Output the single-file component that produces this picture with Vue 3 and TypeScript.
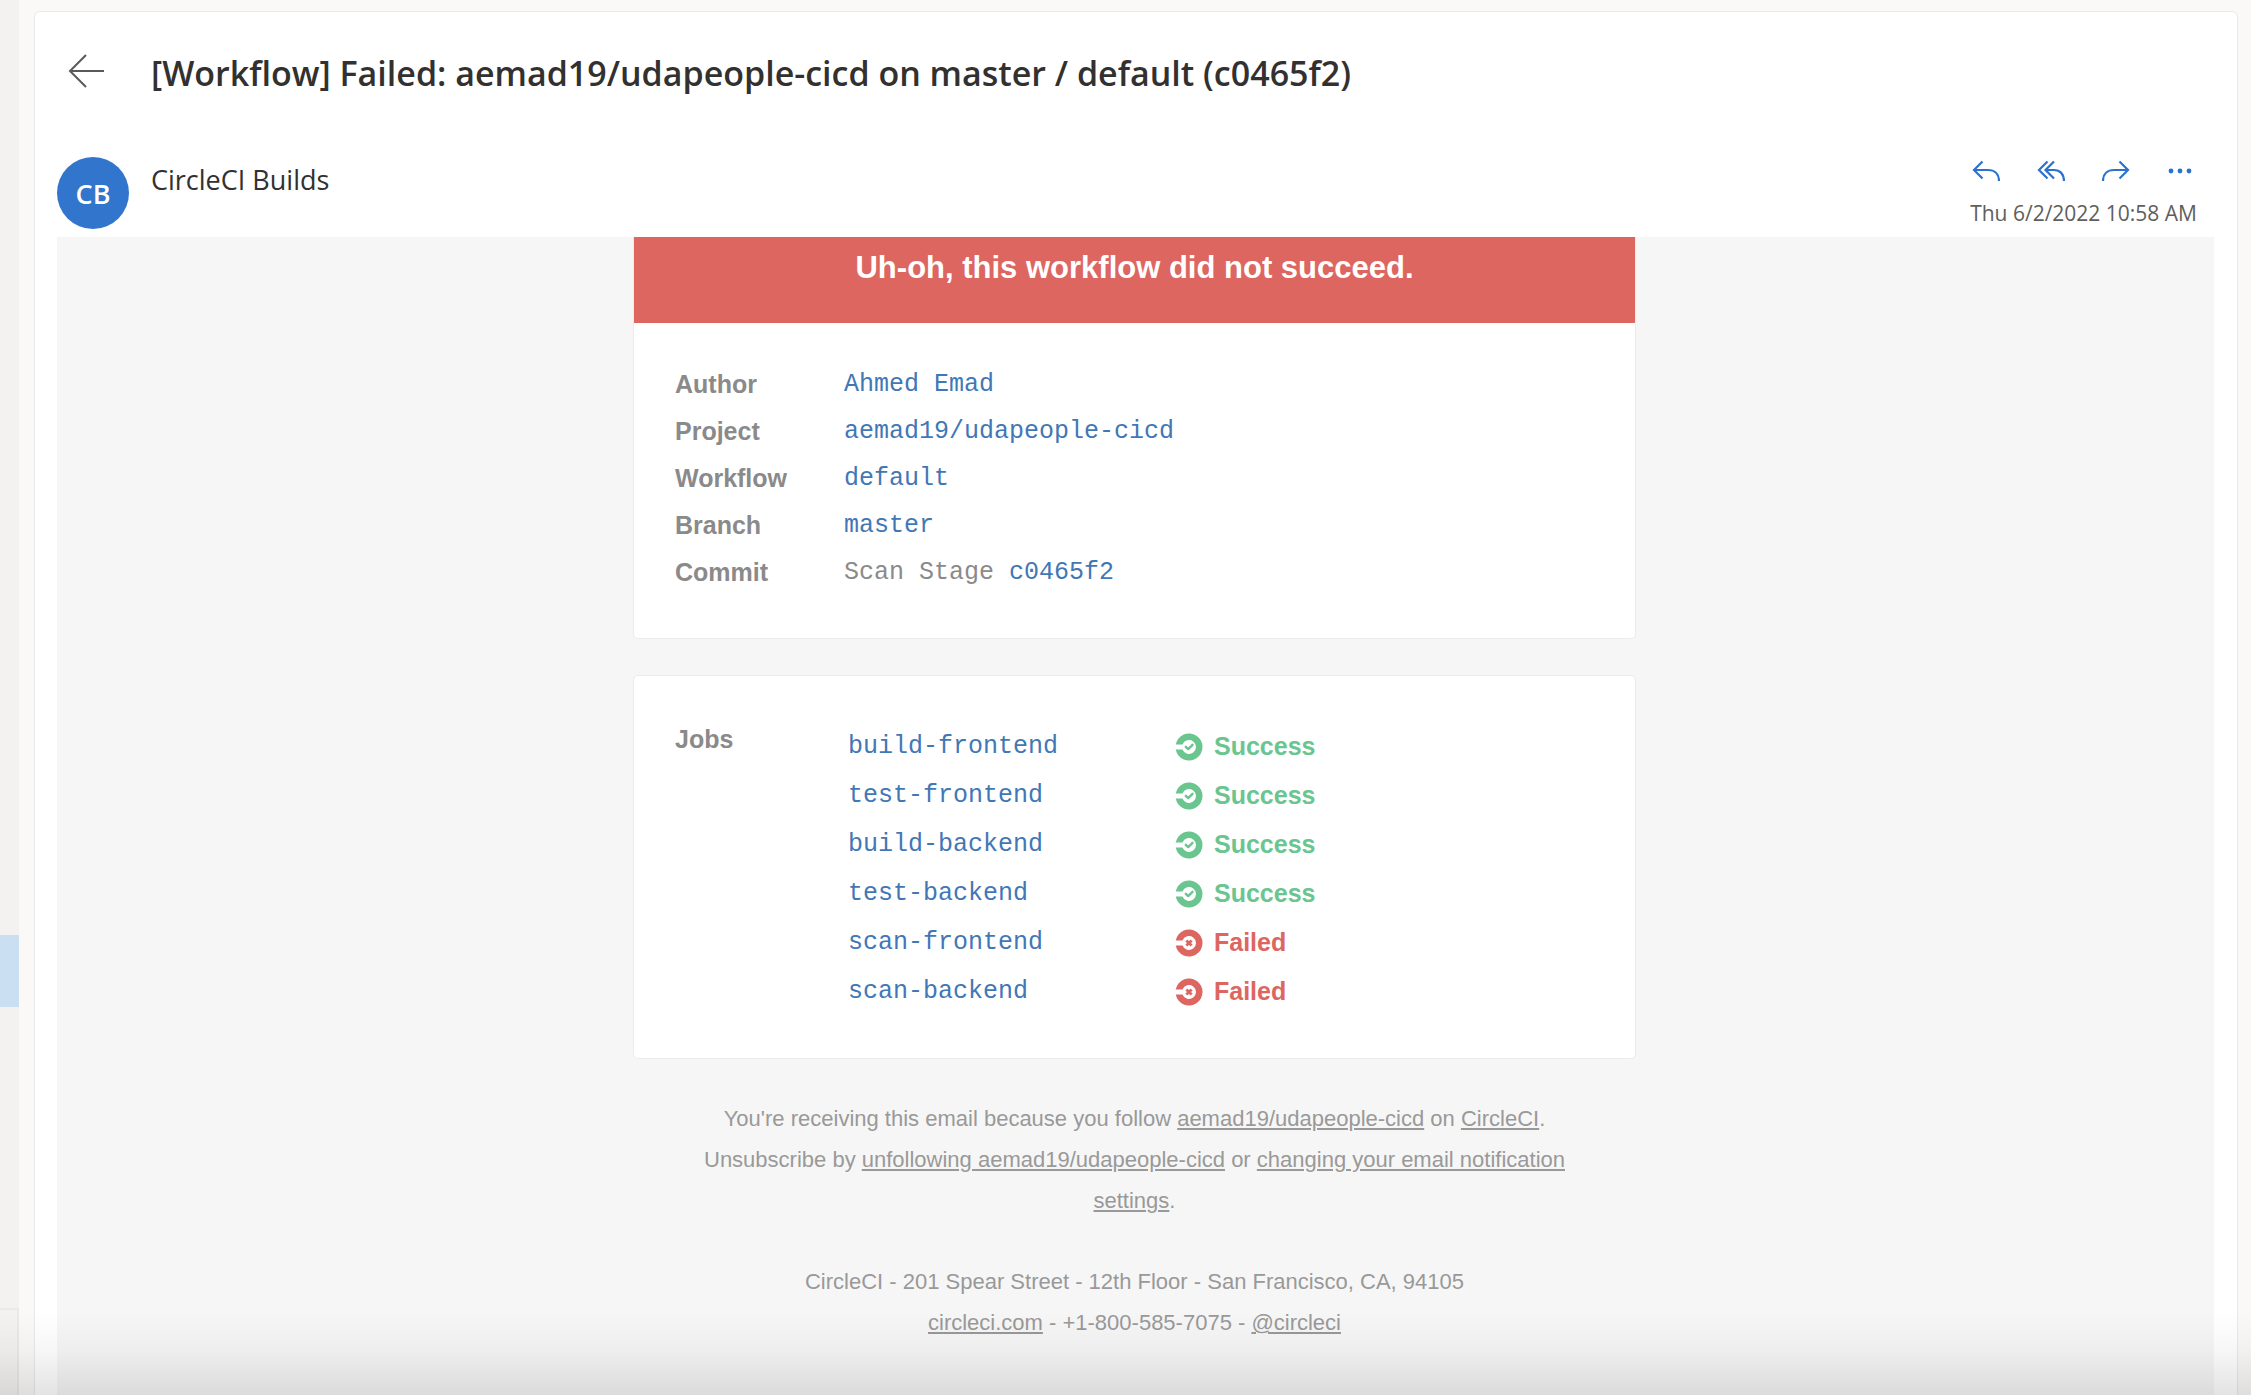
<script setup lang="ts">
interface Job {
  name: string
  ok: boolean
}

const details = [
  { label: 'Author', link: 'Ahmed Emad', note: '' },
  { label: 'Project', link: 'aemad19/udapeople-cicd', note: '' },
  { label: 'Workflow', link: 'default', note: '' },
  { label: 'Branch', link: 'master', note: '' },
  { label: 'Commit', link: 'c0465f2', note: 'Scan Stage' },
]

const jobs: Job[] = [
  { name: 'build-frontend', ok: true },
  { name: 'test-frontend', ok: true },
  { name: 'build-backend', ok: true },
  { name: 'test-backend', ok: true },
  { name: 'scan-frontend', ok: false },
  { name: 'scan-backend', ok: false },
]
</script>

<template>
  <div class="app">
    <aside class="rail">
      <div class="rail-selected"></div>
      <div class="rail-box"></div>
    </aside>

    <main class="panel">
      <header class="subject">
        <button class="icon-button" type="button" aria-label="Back">
          <svg width="38" height="34" viewBox="0 0 38 34" fill="none" stroke="#5b5a58" stroke-width="2">
            <path d="M37 17H3M19 1L3 17l16 16" />
          </svg>
        </button>
        <h1>[Workflow] Failed: aemad19/udapeople-cicd on master / default (c0465f2)</h1>
      </header>

      <section class="sender">
        <div class="avatar">CB</div>
        <h2>CircleCI Builds</h2>
        <div class="meta">
          <div class="actions">
            <button class="icon-button" type="button" aria-label="Reply">
              <svg width="28" height="22" viewBox="0 0 28 22" class="line-icon">
                <path d="M10.500 1.500L2 10l8.500 8.500M2 10h14c6.500 0 11 4 11 11" />
              </svg>
            </button>
            <button class="icon-button" type="button" aria-label="Reply all">
              <svg width="28" height="22" viewBox="0 0 28 22" class="line-icon">
                <path d="M10.500 1.500L2 10l8.500 8.500M17 1.500L8.500 10l8.500 8.500M8.500 10H17c6 0 10 4 10 11" />
              </svg>
            </button>
            <button class="icon-button" type="button" aria-label="Forward">
              <svg width="28" height="22" viewBox="0 0 28 22" class="line-icon">
                <path d="M17.500 1.500L26 10l-8.500 8.500M26 10H12C5.500 10 1 14 1 21" />
              </svg>
            </button>
            <button class="icon-button" type="button" aria-label="More actions">
              <svg width="28" height="22" viewBox="0 0 28 22" fill="#2b72d0">
                <circle cx="4" cy="11" r="2.400" />
                <circle cx="13" cy="11" r="2.400" />
                <circle cx="22" cy="11" r="2.400" />
              </svg>
            </button>
          </div>
          <time datetime="2022-06-02T10:58">Thu 6/2/2022 10:58 AM</time>
        </div>
      </section>

      <article class="message">
        <section class="card summary">
          <h3 class="banner">Uh-oh, this workflow did not succeed.</h3>
          <table class="details">
            <tbody>
              <tr v-for="row in details" :key="row.label">
                <th scope="row">{{ row.label }}</th>
                <td><template v-if="row.note">{{ row.note }}&nbsp;</template><a href="#">{{ row.link }}</a></td>
              </tr>
            </tbody>
          </table>
        </section>

        <section class="card jobs">
          <h3>Jobs</h3>
          <table>
            <tbody>
              <tr v-for="job in jobs" :key="job.name">
                <td class="job-name"><a href="#">{{ job.name }}</a></td>
                <td>
                  <div class="status" :class="job.ok ? 'success' : 'failed'">
                    <svg width="28" height="28" viewBox="0 0 28 28" fill="none" stroke="currentColor">
                      <path
                        d="M0.730 11.500A13.500 13.500 0 1 1 0.730 16.500H7.460A7 7 0 1 0 7.460 11.500Z"
                        fill="currentColor"
                        stroke="none"
                      />
                      <path
                        v-if="job.ok"
                        d="M10.800 13.800l2.400 2.300 4.300-4.300"
                        stroke-width="2.400"
                        stroke-linecap="round"
                        stroke-linejoin="round"
                      />
                      <path v-else d="M11.400 11.400l5.200 5.200M16.600 11.400l-5.200 5.200" stroke-width="2.800" />
                    </svg>
                    <span>{{ job.ok ? 'Success' : 'Failed' }}</span>
                  </div>
                </td>
              </tr>
            </tbody>
          </table>
        </section>

        <footer class="footer">
          <p>
            You're receiving this email because you follow <a href="#">aemad19/udapeople-cicd</a> on
            <a href="#">CircleCI</a>.<br />
            Unsubscribe by <a href="#">unfollowing aemad19/udapeople-cicd</a> or
            <a href="#">changing your email notification settings</a>.
          </p>
          <p>
            CircleCI - 201 Spear Street - 12th Floor - San Francisco, CA, 94105<br />
            <a href="#">circleci.com</a> - +1-800-585-7075 - <a href="#">@circleci</a>
          </p>
        </footer>
      </article>
    </main>

    <div class="shade"></div>
  </div>
</template>

<style>
body {
  margin: 0;
  background: #faf9f8;
}
</style>

<style scoped>
* {
  box-sizing: border-box;
}

h1,
h2,
h3,
p {
  margin: 0;
}

.app {
  position: relative;
  display: flex;
  min-height: 100vh;
  background: #faf9f8;
  font-family: "Open Sans", "Noto Sans", sans-serif;
  color: #323130;
}

.rail {
  display: grid;
  grid-template-rows: 935fr 72px 301fr 87px;
  width: 19px;
  flex: none;
  background: #f3f2f0;
}

.rail-selected {
  grid-row: 2;
  background: #cbdff3;
}

.rail-box {
  grid-row: 4;
  border-top: 2px solid #eae9e8;
  border-right: 2px solid #eae9e8;
}

.panel {
  display: flex;
  flex-direction: column;
  flex: 1;
  min-width: 0;
  margin: 11px 13px 0 15px;
  border: 1px solid #e9e8e7;
  border-bottom: 0;
  border-radius: 6px 6px 0 0;
  background: #fff;
}

.icon-button {
  display: flex;
  padding: 0;
  border: 0;
  background: none;
}

.subject {
  display: flex;
  align-items: center;
  gap: 46px;
  height: 118px;
  padding-left: 32px;
}

.subject h1 {
  padding-top: 4px;
  font-size: 34px;
  font-weight: 600;
  line-height: 48px;
}

.sender {
  display: flex;
  align-items: flex-start;
  height: 107px;
  padding: 27px 40px 0 22px;
}

.avatar {
  width: 72px;
  height: 72px;
  border-radius: 50%;
  background: #3175cd;
  color: #fff;
  font-size: 27px;
  font-weight: 600;
  line-height: 74px;
  text-align: center;
}

.sender h2 {
  margin-left: 22px;
  font-size: 27px;
  font-weight: 400;
  line-height: 46px;
}

.meta {
  margin-left: auto;
}

.actions {
  display: flex;
  justify-content: flex-end;
  gap: 37px;
  padding: 3px 2px 0 0;
}

.line-icon {
  fill: none;
  stroke: #2b72d0;
  stroke-width: 2.2;
}

.meta time {
  display: block;
  margin-top: 14px;
  color: #605e5c;
  font-size: 21px;
  line-height: 34px;
}

.message {
  display: flex;
  flex-direction: column;
  align-items: center;
  flex: 1;
  margin: 0 23px 0 22px;
  padding-right: 2px;
  background: #f6f6f6;
  font-family: "Liberation Sans", Arial, sans-serif;
  color: #8a8a8a;
}

.card {
  width: 1003px;
  max-width: 100%;
  border: 1px solid #ebebeb;
  border-radius: 5px;
  background: #fff;
  font-size: 25px;
}

.summary {
  border-top: 0;
  border-radius: 0 0 5px 5px;
  padding-bottom: 42px;
}

.banner {
  height: 86px;
  padding-top: 13px;
  background: #dd6661;
  color: #fff;
  font-size: 31px;
  line-height: 36px;
  text-align: center;
}

table {
  border-collapse: collapse;
}

th,
td {
  padding: 0;
  text-align: left;
}

td {
  font-family: "Liberation Mono", "Courier New", monospace;
}

.details {
  margin: 38px 0 0 41px;
}

.details tr {
  height: 47px;
}

.details th {
  width: 169px;
}

.card a {
  color: #4277b6;
  text-decoration: none;
}

.jobs {
  display: flex;
  align-items: flex-start;
  margin-top: 36px;
  padding: 45px 41px 42px;
}

.jobs h3 {
  width: 173px;
  font-size: 25px;
  line-height: 37px;
}

.jobs table {
  margin-top: 1px;
}

.jobs tr {
  height: 49px;
}

.job-name {
  width: 327px;
}

.status {
  display: flex;
  align-items: center;
  gap: 11px;
  font-family: "Liberation Sans", Arial, sans-serif;
  font-weight: 700;
}

.success {
  color: #6ac58f;
}

.failed {
  color: #dd6661;
}

.footer {
  width: 900px;
  max-width: 100%;
  padding: 39px 0 48px;
  color: #999;
  font-size: 22px;
  line-height: 41px;
  text-align: center;
}

.footer p + p {
  margin-top: 40px;
}

.footer a {
  color: inherit;
}

.shade {
  position: absolute;
  inset: auto 0 0 0;
  height: 84px;
  background: linear-gradient(rgba(0, 0, 0, 0), rgba(0, 0, 0, 0.03) 45%, rgba(0, 0, 0, 0.11));
  pointer-events: none;
}
</style>
